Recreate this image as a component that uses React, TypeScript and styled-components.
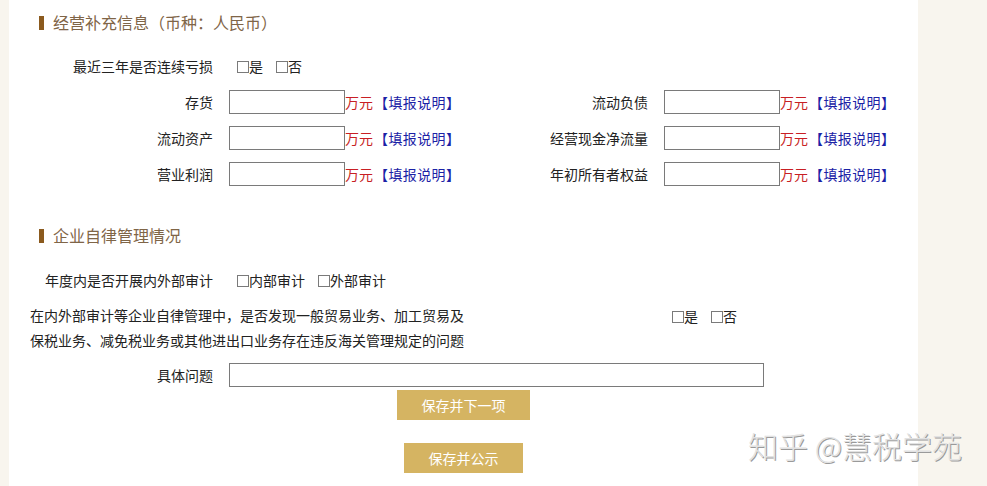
import React from "react";
import styled, { createGlobalStyle } from "styled-components";

const GlobalStyle = createGlobalStyle`
  html, body { margin: 0; padding: 0; background: #f8f5ee; }
  body {
    font-family: "Noto Sans CJK SC", "Noto Sans", sans-serif;
    font-size: 14px;
    color: #222;
  }
  * { box-sizing: border-box; }
`;

const Page = styled.div`
  position: relative;
  width: 987px;
  height: 486px;
  overflow: hidden;
  background: #f8f5ee;
`;

const Panel = styled.main`
  margin-left: 9px;
  width: 909px;
  height: 486px;
  background: #fff;
  padding-top: 7px;
  display: flex;
  flex-direction: column;
`;

const SectionTitle = styled.h2<{ $mt?: number }>`
  margin: ${(p) => p.$mt ?? 0}px 0 0 30px;
  height: 30px;
  display: flex;
  align-items: center;
  gap: 9px;
  font-size: 16px;
  font-weight: normal;
  color: #7f6547;
  &::before {
    content: "";
    width: 5px;
    height: 14px;
    margin-top: 2px;
    background: #8b5a1e;
  }
`;

const Row = styled.div<{ $mt: number }>`
  display: flex;
  align-items: center;
  height: 24px;
  margin-top: ${(p) => p.$mt}px;
  padding-left: 14px;
`;

const Label = styled.span`
  flex-shrink: 0;
  width: 190px;
  margin-right: 16px;
  text-align: right;
  line-height: 24px;
  white-space: nowrap;
`;

const Checks = styled.div`
  display: flex;
  align-items: center;
  gap: 13px;
  margin-left: 8px;
`;

const CheckOption = styled.label`
  display: inline-flex;
  align-items: center;
  line-height: 24px;
  white-space: nowrap;
`;

const Box = styled.input.attrs({ type: "checkbox" })`
  appearance: none;
  margin: 2px 0 0 0;
  width: 12px;
  height: 12px;
  border: 1px solid #7a7a7a;
  background: #fff;
`;

const FieldGrid = styled.div`
  display: grid;
  grid-template-columns: 435px 435px;
  row-gap: 12px;
  margin-top: 12px;
  padding-left: 14px;
`;

const Field = styled.div`
  display: flex;
  align-items: center;
  height: 24px;
`;

const TextInput = styled.input<{ $w: number }>`
  flex-shrink: 0;
  width: ${(p) => p.$w}px;
  height: 24px;
  margin: 0;
  padding: 0 4px;
  border: 1px solid #7a7a7a;
  background: #fff;
  font: inherit;
  outline: none;
`;

const Unit = styled.span`
  color: #c81f24;
  line-height: 24px;
  white-space: nowrap;
`;

const Help = styled.a`
  margin-left: 1px;
  color: #1b22a6;
  line-height: 24px;
  letter-spacing: 0.4px;
  text-decoration: none;
  white-space: nowrap;
  cursor: pointer;
`;

const QuestionRow = styled.div`
  display: flex;
  align-items: flex-start;
  margin-top: 11px;
  padding-left: 21px;
`;

const Question = styled.p`
  margin: 0;
  width: 440px;
  line-height: 25px;
`;

const QuestionChecks = styled(Checks)`
  height: 25px;
  margin-left: 202px;
`;

const ButtonStack = styled.div`
  display: flex;
  flex-direction: column;
  align-items: center;
`;

const ActionButton = styled.button<{ $mt: number }>`
  margin-top: ${(p) => p.$mt}px;
  height: 30px;
  padding: 0 24.5px;
  border: none;
  background: #d5b462;
  color: #fff;
  font: inherit;
  font-size: 14px;
  cursor: pointer;
`;

const Watermark = styled.div`
  position: absolute;
  left: 748px;
  top: 427px;
  font-family: "Noto Sans CJK SC", sans-serif;
  font-size: 30px;
  font-weight: 300;
  line-height: 36px;
  color: #e2e2e2;
  text-shadow: 1px 1px 0 #9a9a9a;
  white-space: nowrap;
  pointer-events: none;
`;

type FieldItem = { label: string };

const leftFields: FieldItem[] = [
  { label: "存货" },
  { label: "流动资产" },
  { label: "营业利润" },
];
const rightFields: FieldItem[] = [
  { label: "流动负债" },
  { label: "经营现金净流量" },
  { label: "年初所有者权益" },
];

const MoneyField = ({ label }: FieldItem) => (
  <Field>
    <Label>{label}</Label>
    <TextInput $w={116} />
    <Unit>万元</Unit>
    <Help>【填报说明】</Help>
  </Field>
);

export default function App() {
  const pairs = leftFields.map((l, i) => [l, rightFields[i]]);
  return (
    <Page>
      <GlobalStyle />
      <Panel>
        <SectionTitle>经营补充信息（币种：人民币）</SectionTitle>
        <Row $mt={17}>
          <Label>最近三年是否连续亏损</Label>
          <Checks>
            <CheckOption>
              <Box />是
            </CheckOption>
            <CheckOption>
              <Box />否
            </CheckOption>
          </Checks>
        </Row>
        <FieldGrid>
          {pairs.map(([l, r]) => (
            <React.Fragment key={l.label}>
              <MoneyField label={l.label} />
              <MoneyField label={r.label} />
            </React.Fragment>
          ))}
        </FieldGrid>

        <SectionTitle $mt={34}>企业自律管理情况</SectionTitle>
        <Row $mt={18}>
          <Label>年度内是否开展内外部审计</Label>
          <Checks>
            <CheckOption>
              <Box />内部审计
            </CheckOption>
            <CheckOption>
              <Box />外部审计
            </CheckOption>
          </Checks>
        </Row>
        <QuestionRow>
          <Question>
            在内外部审计等企业自律管理中，是否发现一般贸易业务、加工贸易及保税业务、减免税业务或其他进出口业务存在违反海关管理规定的问题
          </Question>
          <QuestionChecks>
            <CheckOption>
              <Box />是
            </CheckOption>
            <CheckOption>
              <Box />否
            </CheckOption>
          </QuestionChecks>
        </QuestionRow>
        <Row $mt={10}>
          <Label>具体问题</Label>
          <TextInput $w={535} />
        </Row>
        <ButtonStack>
          <ActionButton $mt={3}>保存并下一项</ActionButton>
          <ActionButton $mt={23}>保存并公示</ActionButton>
        </ButtonStack>
      </Panel>
      <Watermark>知乎 @慧税学苑</Watermark>
    </Page>
  );
}
